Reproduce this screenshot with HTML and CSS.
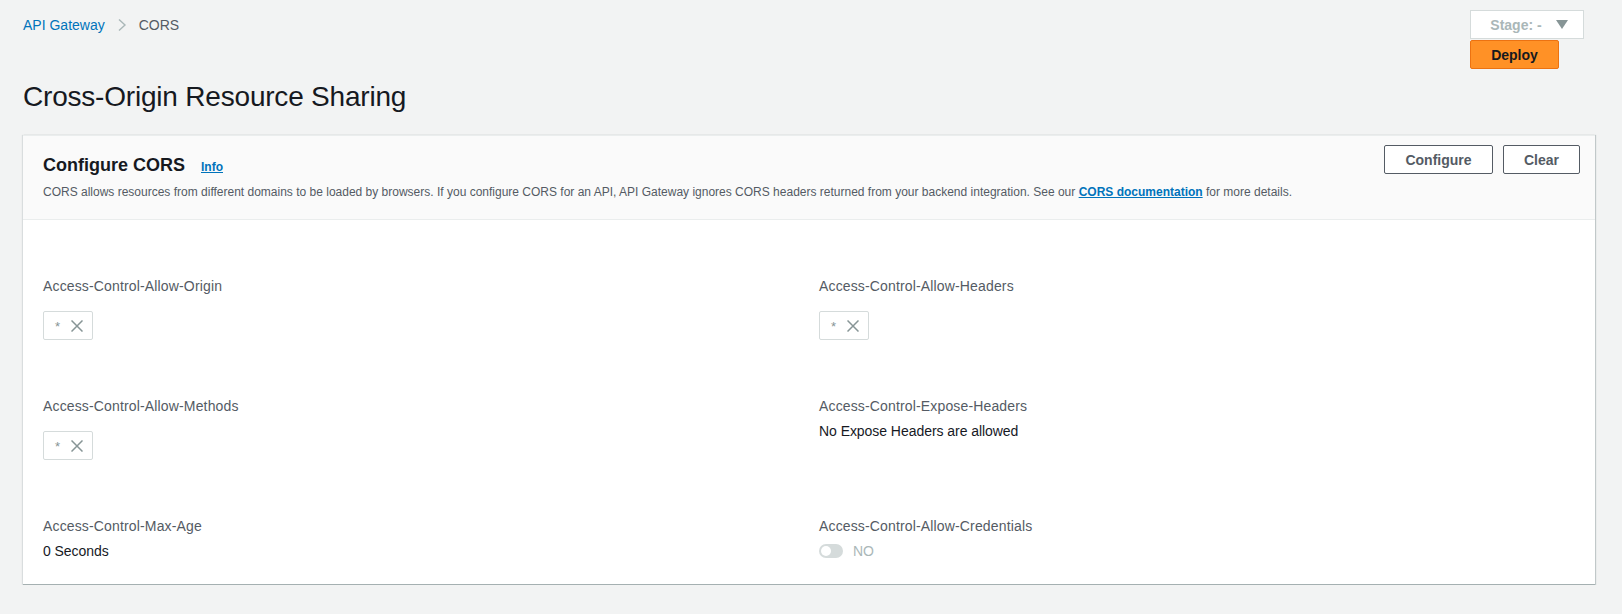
FILE: index.html
```html
<!DOCTYPE html>
<html>
<head>
<meta charset="utf-8">
<link rel="stylesheet" href="styles.css">
</head>
<body>
<div class="page">
  <div class="topbar">
    <nav class="crumbs">
      <a class="crumb-link">API Gateway</a>
      <svg class="crumb-sep" width="10" height="14" viewBox="0 0 10 14"><path d="M2 1.5 L8 7 L2 12.5" fill="none" stroke="#aab7b8" stroke-width="1.4"/></svg>
      <span class="crumb-current">CORS</span>
    </nav>
    <div class="actions">
      <div class="stage">
        <span>Stage: -</span>
        <svg width="12" height="9" viewBox="0 0 12 9"><path d="M0 0 H12 L6 9 Z" fill="#879596"/></svg>
      </div>
      <button class="deploy">Deploy</button>
    </div>
  </div>

  <h1 class="title">Cross-Origin Resource Sharing</h1>

  <section class="panel">
    <header class="panel-head">
      <div class="head-text">
        <div class="head-title"><h2>Configure CORS</h2><a class="info">Info</a></div>
        <p class="desc">CORS allows resources from different domains to be loaded by browsers. If you configure CORS for an API, API Gateway ignores CORS headers returned from your backend integration. See our <a class="doc">CORS documentation</a> for more details.</p>
      </div>
      <div class="head-buttons">
        <button class="btn btn-configure">Configure</button>
        <button class="btn btn-clear">Clear</button>
      </div>
    </header>
    <div class="panel-body">
      <div class="field">
        <div class="label">Access-Control-Allow-Origin</div>
        <div class="token"><span class="star">*</span><svg width="12" height="12" viewBox="0 0 12 12"><path d="M0.5 0.5 L11.5 11.5 M11.5 0.5 L0.5 11.5" stroke="#879596" stroke-width="1.5"/></svg></div>
      </div>
      <div class="field">
        <div class="label">Access-Control-Allow-Headers</div>
        <div class="token"><span class="star">*</span><svg width="12" height="12" viewBox="0 0 12 12"><path d="M0.5 0.5 L11.5 11.5 M11.5 0.5 L0.5 11.5" stroke="#879596" stroke-width="1.5"/></svg></div>
      </div>
      <div class="field">
        <div class="label">Access-Control-Allow-Methods</div>
        <div class="token"><span class="star">*</span><svg width="12" height="12" viewBox="0 0 12 12"><path d="M0.5 0.5 L11.5 11.5 M11.5 0.5 L0.5 11.5" stroke="#879596" stroke-width="1.5"/></svg></div>
      </div>
      <div class="field">
        <div class="label">Access-Control-Expose-Headers</div>
        <div class="value">No Expose Headers are allowed</div>
      </div>
      <div class="field field-last">
        <div class="label">Access-Control-Max-Age</div>
        <div class="value">0 Seconds</div>
      </div>
      <div class="field field-last">
        <div class="label">Access-Control-Allow-Credentials</div>
        <div class="toggle-row"><span class="toggle"><span class="knob"></span></span><span class="toggle-text">NO</span></div>
      </div>
    </div>
  </section>
</div>
</body>
</html>
```

FILE: styles.css
```css
* { box-sizing: border-box; }
body {
  margin: 0;
  background: #f2f3f3;
  font-family: "Liberation Sans", Arial, sans-serif;
  color: #16191f;
}
.page {
  padding: 0 27px 0 23px;
}
.topbar {
  display: flex;
  justify-content: space-between;
  align-items: flex-start;
}
.crumbs {
  display: flex;
  align-items: center;
  padding-top: 15px;
  font-size: 14px;
  line-height: 20px;
}
.crumb-link { color: #0073bb; }
.crumb-sep { margin: 0 12px 0 12px; }
.crumb-current { color: #545b64; }
.actions {
  display: flex;
  flex-direction: column;
  align-items: flex-start;
  margin-top: 10px;
  margin-right: 11px;
  gap: 1px;
}
.stage {
  width: 114px;
  height: 29px;
  background: #fff;
  border: 1px solid #d5dbdb;
  display: flex;
  align-items: center;
  justify-content: center;
  gap: 14px;
  padding-left: 4px;
  font-size: 14px;
  font-weight: bold;
  color: #aab7b8;
}
.deploy {
  width: 89px;
  height: 29px;
  background: #ff9126;
  border: 1px solid #ec7211;
  border-radius: 2px;
  font-family: inherit;
  font-size: 14px;
  font-weight: bold;
  color: #16191f;
  padding: 0;
}
.title {
  margin: 10px 0 20px;
  font-size: 28px;
  line-height: 36px;
  font-weight: normal;
  letter-spacing: -0.2px;
  color: #16191f;
}
.panel {
  background: #fff;
  border-top: 1px solid #eaeded;
  border-bottom: 1px solid #a5b0b1;
  box-shadow: 1px 0 1px 0 rgba(0,28,36,.2), -1px 0 1px 0 rgba(0,28,36,.1);
}
.panel-head {
  display: flex;
  justify-content: space-between;
  align-items: flex-start;
  background: #fafafa;
  border-bottom: 1px solid #eaeded;
  padding: 9px 15px 19px 20px;
}
.head-text { padding-top: 8px; }
.head-title {
  display: flex;
  align-items: baseline;
}
.head-title h2 {
  margin: 0;
  font-size: 18px;
  line-height: 24px;
  font-weight: bold;
  color: #16191f;
}
.info {
  margin-left: 16px;
  font-size: 12px;
  font-weight: bold;
  color: #0073bb;
  text-decoration: underline;
}
.desc {
  margin: 7px 0 0;
  font-size: 12px;
  line-height: 16px;
  color: #545b64;
}
.doc {
  color: #0073bb;
  font-weight: bold;
  text-decoration: underline;
}
.head-buttons {
  display: flex;
  gap: 10px;
}
.btn {
  height: 29px;
  background: #fff;
  border: 1px solid #545b64;
  border-radius: 2px;
  font-family: inherit;
  font-size: 14px;
  font-weight: bold;
  color: #545b64;
  padding: 0;
}
.btn-configure { width: 109px; }
.btn-clear { width: 77px; }
.panel-body {
  display: grid;
  grid-template-columns: 1fr 1fr;
  column-gap: 20px;
  row-gap: 55px;
  padding: 55px 20px 22px;
}
.field { min-height: 65px; }
.field-last { min-height: 46px; }
.label {
  font-size: 14px;
  line-height: 22px;
  color: #545b64;
  letter-spacing: 0.15px;
}
.value {
  margin-top: 3px;
  font-size: 14px;
  line-height: 22px;
  color: #16191f;
  letter-spacing: -0.05px;
}
.token {
  margin-top: 14px;
  width: 50px;
  height: 29px;
  border: 1px solid #d5dbdb;
  border-radius: 2px;
  background: #fff;
  display: flex;
  align-items: center;
  padding-left: 11px;
  gap: 11px;
}
.star {
  font-size: 13px;
  color: #879596;
  line-height: 1;
  margin-top: 2px;
}
.toggle-row {
  display: flex;
  align-items: center;
  gap: 10px;
  margin-top: 3px;
}
.toggle {
  width: 24px;
  height: 14px;
  border-radius: 7px;
  background: #d5dbdb;
  position: relative;
}
.knob {
  position: absolute;
  left: 2px;
  top: 2px;
  width: 10px;
  height: 10px;
  border-radius: 50%;
  background: #fff;
}
.toggle-text {
  font-size: 14px;
  line-height: 22px;
  color: #aab7b8;
}
```
